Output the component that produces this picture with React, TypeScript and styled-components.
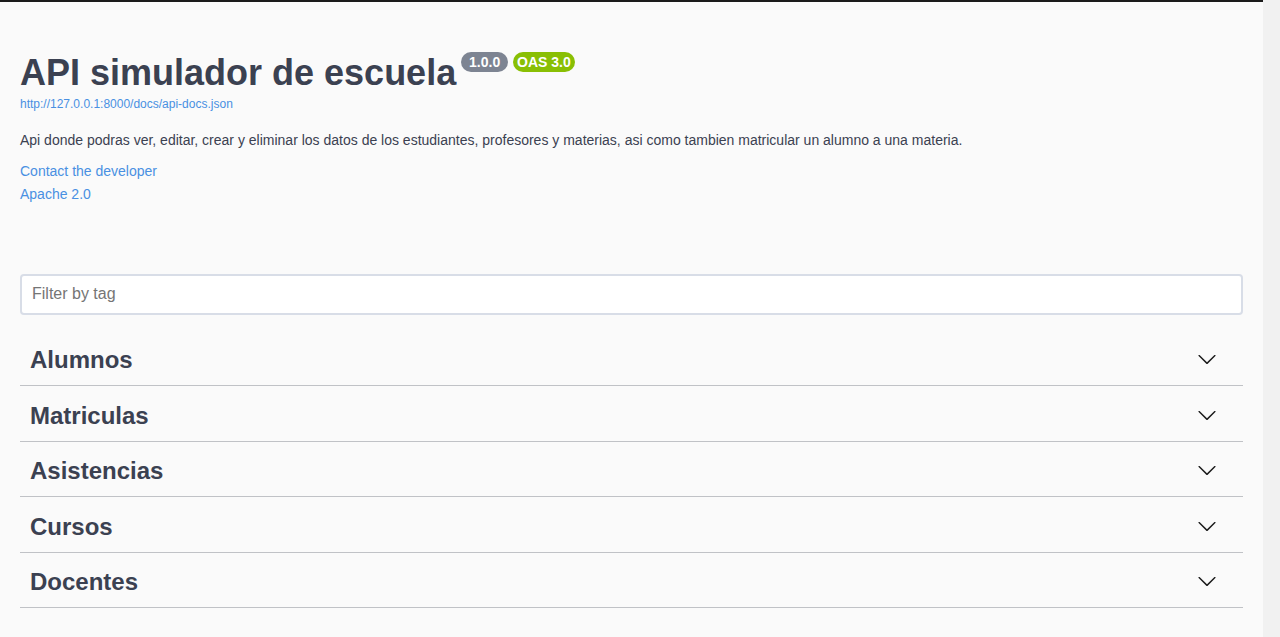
import React from 'react';
import styled, { createGlobalStyle } from 'styled-components';

const GlobalStyle = createGlobalStyle`
  html, body {
    margin: 0;
    padding: 0;
    height: 100%;
    overflow: hidden;
  }
  body {
    background-color: #fafafa;
    font-family: 'Liberation Sans', Arial, sans-serif;
  }
  * {
    box-sizing: border-box;
  }
`;

const tags = ['Alumnos', 'Matriculas', 'Asistencias', 'Cursos', 'Docentes'];

function ChevronDown() {
  return (
    <svg width="20" height="20" viewBox="0 0 20 20" aria-hidden="true">
      <path
        fill="#1b1b1b"
        d="M17.418 6.109c.272-.268.709-.268.979 0s.271.701 0 .969l-7.908 7.83c-.27.268-.707.268-.979 0l-7.908-7.83c-.27-.268-.27-.701 0-.969.271-.268.709-.268.979 0L10 13.25l7.418-7.141z"
      />
    </svg>
  );
}

export default function App() {
  return (
    <>
      <GlobalStyle />
      <Page>
        <Main>
          <TopLine />
          <Content>
            <Info>
              <TitleRow>
                <Title>API simulador de escuela</Title>
                <Badge $color="#7d8492">{' 1.0.0 '}</Badge>
                <Badge $color="#89bf04">OAS 3.0</Badge>
              </TitleRow>
              <SpecLink href="#">http://127.0.0.1:8000/docs/api-docs.json</SpecLink>
              <Description>
                Api donde podras ver, editar, crear y eliminar los datos de los estudiantes, profesores y
                materias, asi como tambien matricular un alumno a una materia.
              </Description>
              <InfoLinks>
                <InfoLink href="#">Contact the developer</InfoLink>
                <InfoLink href="#">Apache 2.0</InfoLink>
              </InfoLinks>
            </Info>
            <FilterInput placeholder="Filter by tag" />
            <TagList>
              {tags.map((tag) => (
                <TagRow key={tag}>
                  <TagName>{tag}</TagName>
                  <ExpandButton>
                    <ChevronDown />
                  </ExpandButton>
                </TagRow>
              ))}
            </TagList>
          </Content>
        </Main>
        <ScrollTrack />
      </Page>
    </>
  );
}

const Page = styled.div`
  display: flex;
  width: 100%;
  height: 100vh;
`;

const Main = styled.div`
  flex: 1;
  display: flex;
  flex-direction: column;
  background-color: #fafafa;
`;

const TopLine = styled.div`
  height: 2px;
  background-color: #1b1b1b;
`;

const ScrollTrack = styled.div`
  width: 17px;
  background-color: #f1f1f1;
`;

const Content = styled.div`
  padding: 0 20px;
`;

const Info = styled.div`
  padding-top: 47px;
  display: flex;
  flex-direction: column;
  align-items: flex-start;
`;

const TitleRow = styled.div`
  display: flex;
  align-items: flex-start;
  gap: 5px;
`;

const Title = styled.h2`
  margin: 3px 0 0;
  font-size: 36px;
  line-height: 42px;
  font-weight: 700;
  color: #3b4151;
`;

const Badge = styled.span<{ $color: string }>`
  margin-top: 3px;
  padding: 2px 4px;
  border-radius: 57px;
  background-color: ${(p) => p.$color};
  color: #fff;
  font-size: 14px;
  line-height: 16px;
  font-weight: 700;
  white-space: pre;
`;

const SpecLink = styled.a`
  margin-top: 3px;
  font-size: 12px;
  line-height: 14px;
  color: #4990e2;
  text-decoration: none;
`;

const Description = styled.p`
  margin: 21px 0 0;
  font-size: 14px;
  line-height: 16px;
  color: #3b4151;
`;

const InfoLinks = styled.div`
  margin-top: 15px;
  display: flex;
  flex-direction: column;
  gap: 7px;
`;

const InfoLink = styled.a`
  font-size: 14px;
  line-height: 16px;
  color: #4990e2;
  text-decoration: none;
`;

const FilterInput = styled.input`
  display: block;
  width: 100%;
  height: 41px;
  margin-top: 71.5px;
  padding: 8px 10px;
  border: 2px solid #d8dde7;
  border-radius: 4px;
  background-color: #fff;
  font-family: 'Liberation Sans', Arial, sans-serif;
  font-size: 16px;
  color: #3b4151;
  outline: none;
  &::placeholder {
    color: #757575;
  }
`;

const TagList = styled.div`
  margin-top: 21px;
  display: flex;
  flex-direction: column;
  gap: 5px;
`;

const TagRow = styled.div`
  height: 50.5px;
  display: flex;
  align-items: center;
  justify-content: space-between;
  padding: 0 26px 0 10px;
  border-bottom: 1px solid rgba(59, 65, 81, 0.3);
`;

const TagName = styled.h3`
  margin: 0;
  font-size: 24px;
  font-weight: 700;
  color: #3b4151;
`;

const ExpandButton = styled.button`
  display: flex;
  padding: 0;
  margin-top: -2px;
  border: none;
  background: none;
  cursor: pointer;
`;
